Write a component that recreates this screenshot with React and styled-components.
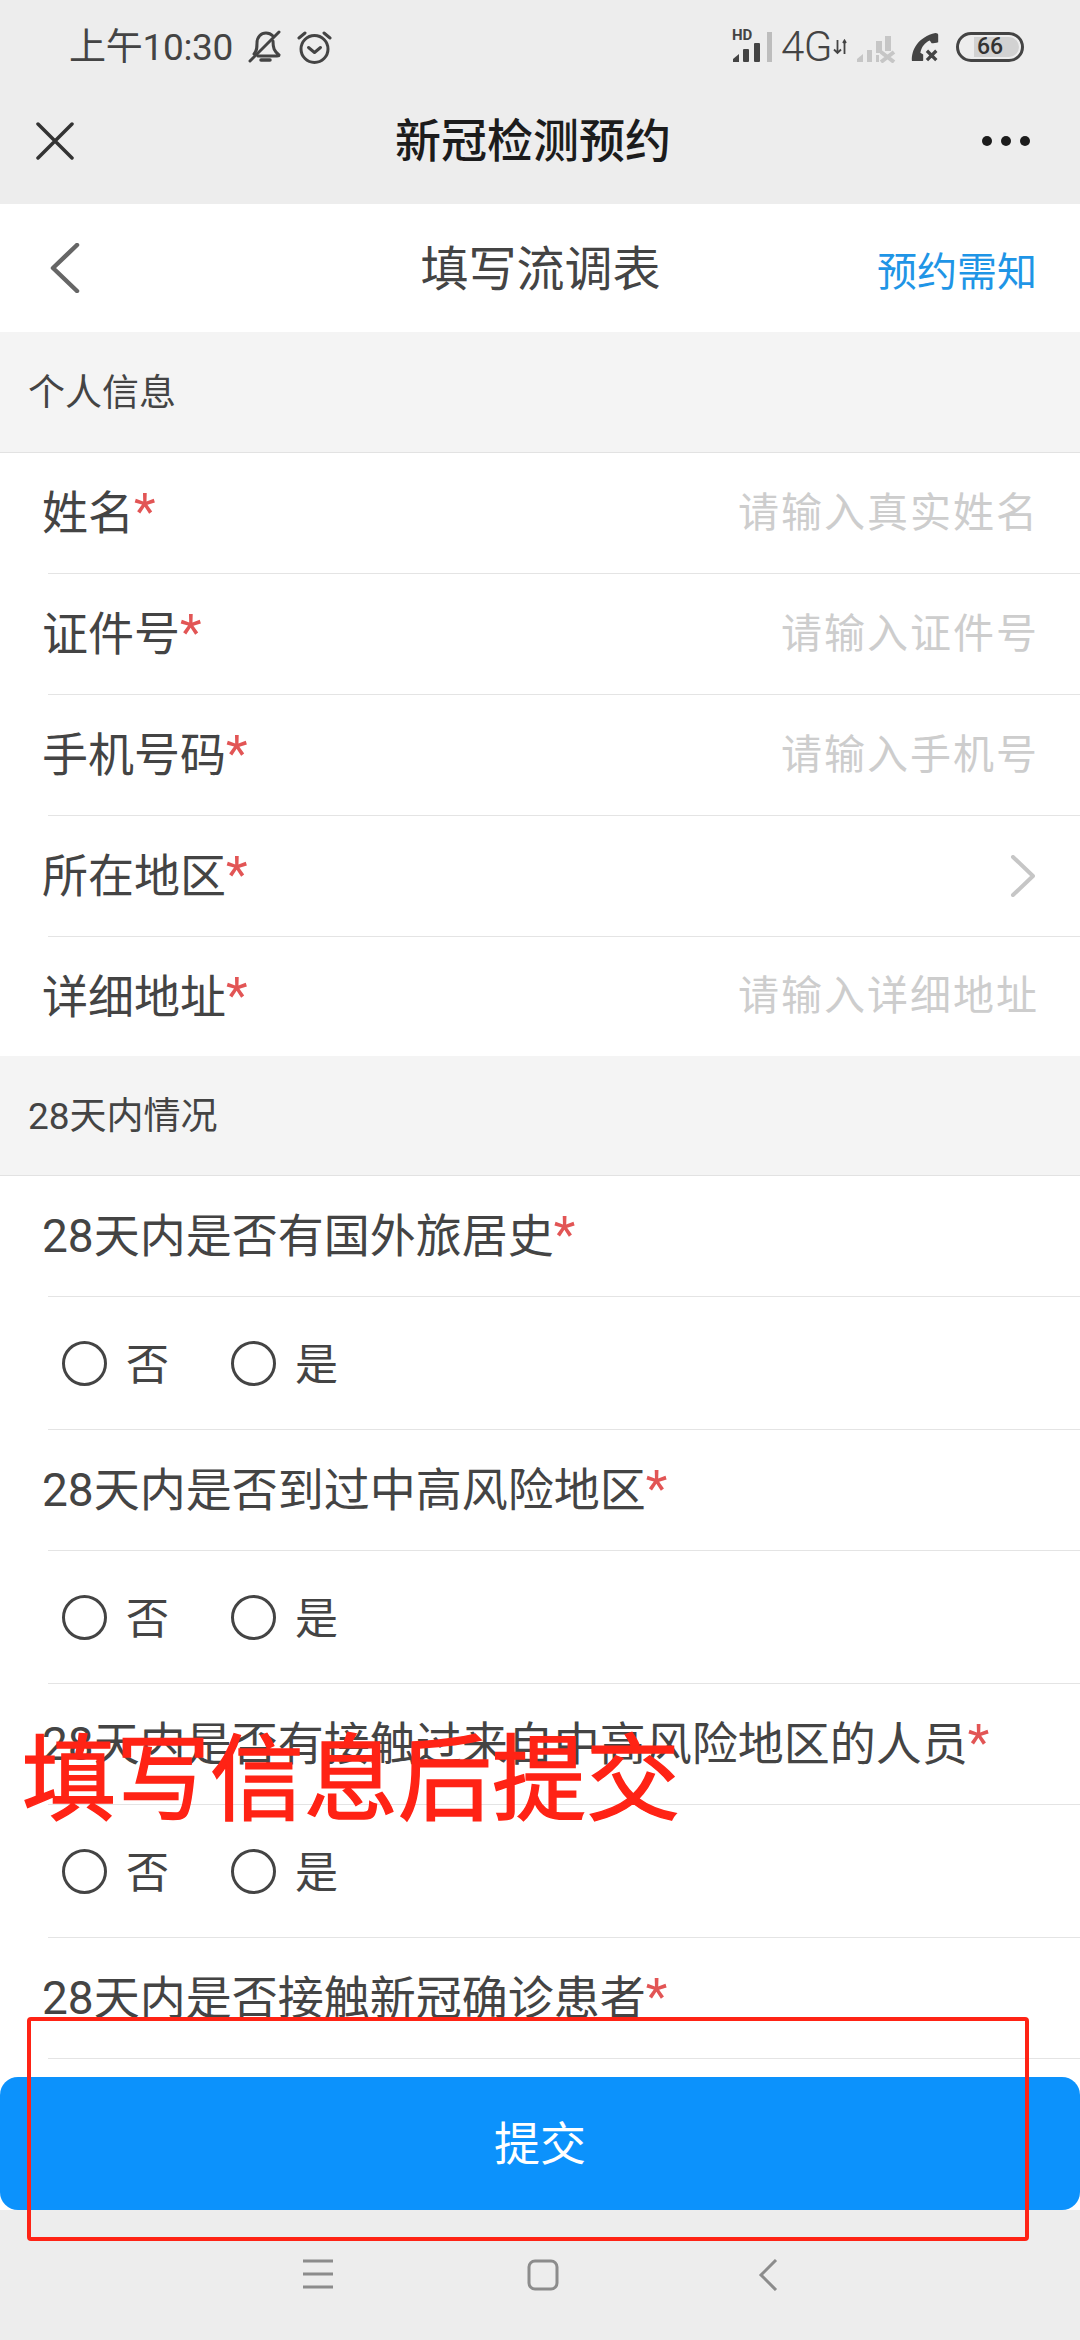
import styled, { createGlobalStyle } from "styled-components";

const GlobalStyle = createGlobalStyle`
    html, body {
        margin: 0;
        padding: 0;
        background: #fff;
    }
    body {
        font-family: Roboto, "Noto Sans CJK SC", sans-serif;
    }
`

const Screen = styled.div`
    position: relative;
    width: 1080px;
    height: 2340px;
    overflow: hidden;
    display: flex;
    flex-direction: column;
    background: #fff;
    color: #444;
`

const TopArea = styled.div`
    height: 204px;
    flex: none;
    background: #ededed;
`

const StatusBar = styled.div`
    height: 90px;
    padding: 4px 56px 0 69px;
    box-sizing: border-box;
    display: flex;
    align-items: center;
    color: #444;
`

const Time = styled.span`
    font-size: 37px;
    line-height: 1;
    letter-spacing: -0.3px;
    width: 179px;
`

const AlertIcons = styled.div`
    display: flex;
    align-items: center;
    gap: 15px;
`

const StatusRight = styled.div`
    margin-left: auto;
    display: flex;
    align-items: center;
`

const Signal = styled.div`
    position: relative;
    width: 42px;
    height: 32px;
    margin-right: 7px;
`

const HdMark = styled.span`
    position: absolute;
    left: 0;
    top: -3px;
    font-size: 15px;
    line-height: 1;
    font-weight: 700;
    color: #444;
`

const NetworkText = styled.span`
    font-size: 42px;
    font-weight: 300;
    line-height: 1;
    width: 52px;
    letter-spacing: -0.5px;
`

const SimGroup = styled.div`
    display: flex;
    align-items: center;
    gap: 12px;
    margin-left: 9px;
`

const Battery = styled.div`
    width: 68px;
    height: 30px;
    box-sizing: border-box;
    border: 3px solid #444;
    border-radius: 15px;
    padding: 2px;
    display: flex;
    margin-left: 15px;
`

const BatteryFill = styled.div`
    width: 100%;
    border-radius: 11px;
    background: linear-gradient(90deg, #ededed 0 22%, #d2d2d2 22% 100%);
    font-size: 23px;
    font-weight: 500;
    line-height: 20px;
    text-align: center;
    color: #333;
`

const NavBar = styled.div`
    height: 114px;
    padding: 0 50px 12px 36px;
    box-sizing: border-box;
    display: grid;
    grid-template-columns: 100px 1fr 100px;
    align-items: center;
`

const NavTitle = styled.h1`
    margin: 0;
    text-align: center;
    font-size: 46px;
    font-weight: 500;
    line-height: 1;
    color: #1c1c1c;
`

const Dots = styled.div`
    justify-self: end;
    display: flex;
    gap: 9px;
`

const Dot = styled.span`
    width: 10px;
    height: 10px;
    border-radius: 50%;
    background: #1c1c1c;
`

const PageHeader = styled.div`
    height: 128px;
    flex: none;
    padding: 0 43px 0 50px;
    box-sizing: border-box;
    display: grid;
    grid-template-columns: 120px 1fr 126px;
    align-items: center;
    background: #fff;
`

const PageTitle = styled.h2`
    margin: 0;
    padding-top: 3px;
    text-align: center;
    font-size: 48px;
    font-weight: 400;
    line-height: 1;
    color: #444;
`

const Notice = styled.a`
    justify-self: end;
    white-space: nowrap;
    font-size: 40px;
    line-height: 1;
    color: #1f95e6;
    padding-top: 10px;
`

const Form = styled.div`
    flex: 1;
    min-height: 0;
    overflow: hidden;
`

const SectionTitle = styled.div`
    height: ${(p) => p.$height}px;
    box-sizing: border-box;
    padding: 0 0 5px 28px;
    display: flex;
    align-items: center;
    background: #f4f4f4;
    border-bottom: 1px solid #e2e2e2;
    font-size: 37px;
    color: #444;
`

const Divider = styled.div`
    height: 1px;
    margin-left: 48px;
    background: #e4e4e4;
`

const FieldRow = styled.div`
    height: ${(p) => p.$height || 120}px;
    padding: 0 41px 0 42px;
    display: flex;
    align-items: center;
    justify-content: space-between;
`

const Label = styled.span`
    font-size: 46px;
    line-height: 1;
    color: #444;
    white-space: nowrap;
`

const Required = styled.span`
    color: #e25555;
    font-size: 50px;
    line-height: 0;
`

const Placeholder = styled.span`
    font-size: 41px;
    letter-spacing: 2px;
    line-height: 1;
    color: #cdcdcd;
`

const ArrowSlot = styled.span`
    display: flex;
    margin-right: 4px;
`

const OptionRow = styled.div`
    height: 132px;
    padding-left: 62px;
    display: flex;
    align-items: center;
    gap: 62px;
`

const Option = styled.label`
    display: flex;
    align-items: center;
    gap: 19px;
    font-size: 43px;
    line-height: 1;
    color: #444;
`

const OptionText = styled.span`
    padding-top: 5px;
`

const Radio = styled.span`
    width: 45px;
    height: 45px;
    box-sizing: border-box;
    border: 3px solid #444;
    border-radius: 50%;
`

const SubmitButton = styled.button`
    flex: none;
    width: 100%;
    height: 133px;
    padding: 0;
    border: 0;
    border-radius: 18px;
    background: #0c92fc;
    color: #fff;
    font-family: inherit;
    font-size: 46px;
    line-height: 1;
`

const BottomNav = styled.div`
    height: 130px;
    flex: none;
    background: #ededed;
    display: flex;
    justify-content: center;
    padding-top: 49px;
    box-sizing: border-box;
`

const NavSlot = styled.div`
    width: 225px;
    height: 32px;
    display: flex;
    justify-content: center;
    transform: translateX(3px);
`

const Annotation = styled.div`
    position: absolute;
    left: 22px;
    top: 1734px;
    font-size: 94px;
    font-weight: 400;
    line-height: 94px;
    color: #ff2315;
    white-space: nowrap;
    -webkit-text-stroke: 1.500px #ff2315;
`

const RedFrame = styled.div`
    position: absolute;
    left: 27px;
    top: 2017px;
    width: 1002px;
    height: 224px;
    box-sizing: border-box;
    border: 4px solid #ff2315;
    border-radius: 4px;
`

const personal = [
    { label: "姓名", hint: "请输入真实姓名" },
    { label: "证件号", hint: "请输入证件号" },
    { label: "手机号码", hint: "请输入手机号" },
    { label: "所在地区", arrow: true },
    { label: "详细地址", hint: "请输入详细地址" },
];

const questions = [
    "28天内是否有国外旅居史",
    "28天内是否到过中高风险地区",
    "28天内是否有接触过来自中高风险地区的人员",
    "28天内是否接触新冠确诊患者",
];

const BellOff = () => (
    <svg width="34" height="34" viewBox="0 0 34 34" fill="none" stroke="#444" strokeWidth="3">
        <path d="M6 24c3-3 3-6 3-11 0-6 4-10 9-10 3 0 5 1 7 3" strokeLinecap="round" />
        <path d="M25 11c0 7 1 10 6 14 0 1-1 1-2 1H10" strokeLinecap="round" />
        <path d="M2 31 31 2" strokeLinecap="round" />
        <path d="M13 30h9" strokeWidth="3.5" strokeLinecap="round" />
    </svg>
);

const Alarm = () => (
    <svg width="35" height="34" viewBox="0 0 35 34" fill="none" stroke="#444" strokeWidth="3" strokeLinecap="round" strokeLinejoin="round">
        <circle cx="17.5" cy="19" r="13.5" />
        <path d="M11.5 17.5 17.500 22.500 23.500 17.500" />
        <path d="M2 8 8 3M33 8 27 3" />
    </svg>
);

const SignalBars = ({ color = "#444", lastColor }) => (
    <svg width="42" height="32" viewBox="0 0 42 32" fill={color}>
        <path d="M1 31v-3l6-5v8z" />
        <rect x="11" y="18" width="6" height="13" rx="1" />
        <rect x="22" y="12" width="6" height="19" rx="1" />
        <rect x="35" y="1" width="5" height="30" fill={lastColor || color} />
    </svg>
);

const Arrows = () => (
    <svg width="15" height="16" viewBox="0 0 15 16" fill="none" stroke="#444" strokeWidth="1.8">
        <path d="M4.500 1v13M1 10.500l3.500 3.500L8 10.500" />
        <path d="M11.500 15V2" />
        <path d="M10 4l1.500-2.500L13 4" />
    </svg>
);

const NoSignal = () => (
    <svg width="42" height="32" viewBox="0 0 42 32" fill="#c6c6c6" stroke="none">
        <path d="M0 31v-3l6-5v8z" />
        <rect x="10" y="19" width="5" height="12" />
        <rect x="19" y="10" width="6" height="12" />
        <rect x="28" y="5" width="6" height="15" />
        <rect x="19" y="24" width="3" height="7" />
        <path d="M24 21l13 10M37 21 24 31" stroke="#c6c6c6" strokeWidth="4" />
    </svg>
);

const MissedCall = () => (
    <svg width="30" height="32" viewBox="0 0 32 32" fill="#444">
        <path d="M1 31c-1-12 7-26 25-30 2 0 3 1 3 2v8c-2 1-5 1-7 1l-2-3c-5 2-9 7-10 13l3 2v6c0 1-1 1-2 1z" />
        <path d="M17 20 27 30M27 20 17 30" fill="none" stroke="#444" strokeWidth="3.500" />
    </svg>
);

const Cross = () => (
    <svg width="38" height="38" viewBox="0 0 38 38" fill="none" stroke="#333" strokeWidth="3.500" strokeLinecap="round">
        <path d="M2 2 36 36M36 2 2 36" />
    </svg>
);

const BackIcon = () => (
    <svg width="30" height="50" viewBox="0 0 30 50" fill="none" stroke="#666" strokeWidth="4.500" strokeLinecap="round" strokeLinejoin="round">
        <path d="M27 2 3 25 27 48" />
    </svg>
);

const ArrowRight = () => (
    <svg width="25" height="42" viewBox="0 0 25 42" fill="none" stroke="#c6c6c6" strokeWidth="4" strokeLinecap="round" strokeLinejoin="round">
        <path d="M3 2 23 21 3 40" />
    </svg>
);

const MenuIcon = () => (
    <svg width="30" height="30" viewBox="0 0 30 30" stroke="#8c8c8c" strokeWidth="3">
        <path d="M0 2h30M0 15h30M0 28h30" />
    </svg>
);

const HomeIcon = () => (
    <svg width="32" height="32" viewBox="0 0 32 32" fill="none" stroke="#8c8c8c" strokeWidth="3">
        <rect x="2" y="2" width="28" height="28" rx="6" />
    </svg>
);

const ReturnIcon = () => (
    <svg width="20" height="32" viewBox="0 0 20 32" fill="none" stroke="#8c8c8c" strokeWidth="3">
        <path d="M18 1 3 16 18 31" />
    </svg>
);

export default function App() {
    return (
        <Screen>
            <GlobalStyle />
            <TopArea>
                <StatusBar>
                    <Time>上午10:30</Time>
                    <AlertIcons>
                        <BellOff />
                        <Alarm />
                    </AlertIcons>
                    <StatusRight>
                        <Signal>
                            <SignalBars lastColor="#bdbdbd" />
                            <HdMark>HD</HdMark>
                        </Signal>
                        <NetworkText>4G</NetworkText>
                        <Arrows />
                        <SimGroup>
                            <NoSignal />
                            <MissedCall />
                        </SimGroup>
                        <Battery>
                            <BatteryFill>66</BatteryFill>
                        </Battery>
                    </StatusRight>
                </StatusBar>
                <NavBar>
                    <Cross />
                    <NavTitle>新冠检测预约</NavTitle>
                    <Dots>
                        <Dot />
                        <Dot />
                        <Dot />
                    </Dots>
                </NavBar>
            </TopArea>

            <PageHeader>
                <BackIcon />
                <PageTitle>填写流调表</PageTitle>
                <Notice>预约需知</Notice>
            </PageHeader>

            <Form>
                <SectionTitle $height={121}>个人信息</SectionTitle>
                {personal.map((item, index) => (
                    <div key={item.label}>
                        {index > 0 && <Divider />}
                        <FieldRow $height={index === personal.length - 1 ? 119 : 120}>
                            <Label>{item.label}<Required>*</Required></Label>
                            {item.hint && <Placeholder>{item.hint}</Placeholder>}
                            {item.arrow && <ArrowSlot><ArrowRight /></ArrowSlot>}
                        </FieldRow>
                    </div>
                ))}
                <SectionTitle $height={120}>28天内情况</SectionTitle>
                {questions.map((question, index) => (
                    <div key={question}>
                        <FieldRow>
                            <Label>{question}<Required>*</Required></Label>
                        </FieldRow>
                        <Divider />
                        {index < questions.length - 1 && (
                            <>
                                <OptionRow>
                                    <Option><Radio /><OptionText>否</OptionText></Option>
                                    <Option><Radio /><OptionText>是</OptionText></Option>
                                </OptionRow>
                                <Divider />
                            </>
                        )}
                    </div>
                ))}
            </Form>

            <SubmitButton>提交</SubmitButton>

            <BottomNav>
                <NavSlot><MenuIcon /></NavSlot>
                <NavSlot><HomeIcon /></NavSlot>
                <NavSlot><ReturnIcon /></NavSlot>
            </BottomNav>

            <Annotation>填写信息后提交</Annotation>
            <RedFrame />
        </Screen>
    );
}
